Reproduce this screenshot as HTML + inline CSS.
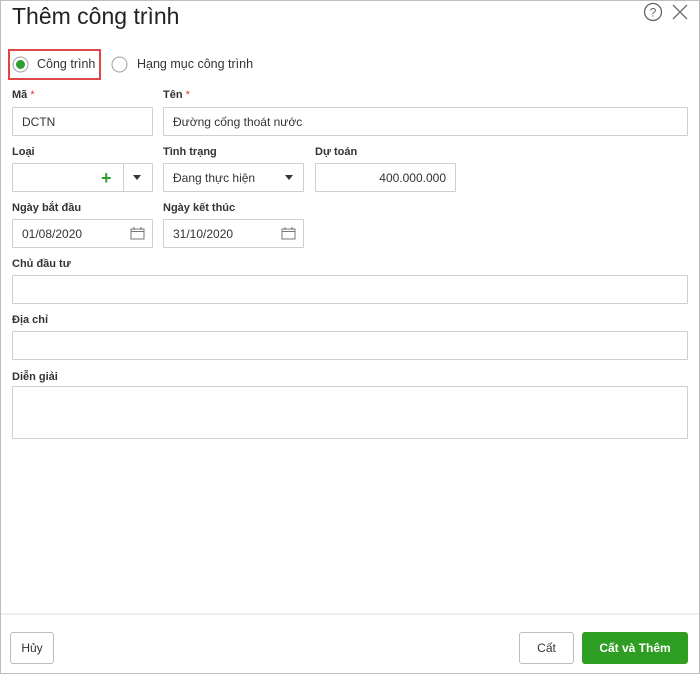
<!DOCTYPE html>
<html><head><meta charset="utf-8"><style>
*{box-sizing:border-box;margin:0;padding:0}
body{width:700px;height:674px;background:#fff;font-family:"Liberation Sans","DejaVu Sans",sans-serif;position:relative;overflow:hidden;color:#222}
.frame{position:absolute;left:0;top:0;width:700px;height:674px;border:1px solid #bdbdbd}
.a{position:absolute}
.lbl{position:absolute;font-size:11px;font-weight:bold;color:#333}
.lbl i{color:#e53935;font-style:normal;font-weight:normal}
.in{position:absolute;border:1px solid #cfcfcf;background:#fff;font-size:12px;color:#333;padding-left:9px;display:flex;align-items:center;border-radius:1px}
.btn{position:absolute;border:1px solid #bdbdbd;border-radius:3px;font-size:12px;display:flex;align-items:center;justify-content:center;background:#fff;color:#333}
</style></head><body>
<div class="frame"></div>
<div class="a" style="left:12px;top:3px;font-size:23px;color:#222">Thêm công trình</div>
<svg class="a" style="left:643px;top:2px" width="20" height="20" viewBox="0 0 20 20"><circle cx="10" cy="10" r="8.5" fill="none" stroke="#666" stroke-width="1.3"/><text x="10" y="14.5" font-size="12" text-anchor="middle" fill="#666" font-family="Liberation Sans">?</text></svg>
<svg class="a" style="left:671px;top:3px" width="18" height="18" viewBox="0 0 18 18"><path d="M2 2L16 16M16 2L2 16" stroke="#777" stroke-width="1.5"/></svg>

<div class="a" style="left:8px;top:49px;width:93px;height:31px;border:2px solid #e04646"></div>
<svg class="a" style="left:12px;top:56px" width="17" height="17"><circle cx="8.5" cy="8.5" r="7.5" fill="#fff" stroke="#9e9e9e"/><circle cx="8.5" cy="8.5" r="4.5" fill="#2e9e2e"/></svg>
<div class="a" style="left:37px;top:57px;font-size:12.5px;color:#333">Công trình</div>
<svg class="a" style="left:111px;top:56px" width="17" height="17"><circle cx="8.5" cy="8.5" r="7.5" fill="#fff" stroke="#9e9e9e"/></svg>
<div class="a" style="left:137px;top:57px;font-size:12.5px;color:#333">Hạng mục công trình</div>

<div class="lbl" style="left:12px;top:89px">Mã <i>*</i></div>
<div class="lbl" style="left:163px;top:89px">Tên <i>*</i></div>
<div class="in" style="left:12px;top:107px;width:141px;height:29px">DCTN</div>
<div class="in" style="left:163px;top:107px;width:525px;height:29px">Đường cống thoát nước</div>

<div class="lbl" style="left:12px;top:146px">Loại</div>
<div class="lbl" style="left:163px;top:146px">Tình trạng</div>
<div class="lbl" style="left:315px;top:146px">Dự toán</div>
<div class="in" style="left:12px;top:163px;width:141px;height:29px"></div>
<div class="a" style="left:123px;top:164px;width:1px;height:27px;background:#cfcfcf"></div>
<div class="a" style="left:101px;top:168px;font-size:18px;color:#2e9e2e;font-weight:bold">+</div>
<svg class="a" style="left:133px;top:175px" width="8" height="5"><path d="M0 0H8L4 5Z" fill="#333"/></svg>
<div class="in" style="left:163px;top:163px;width:141px;height:29px">Đang thực hiện</div>
<svg class="a" style="left:285px;top:175px" width="8" height="5"><path d="M0 0H8L4 5Z" fill="#333"/></svg>
<div class="in" style="left:315px;top:163px;width:141px;height:29px;justify-content:flex-end;padding-right:9px">400.000.000</div>

<div class="lbl" style="left:12px;top:202px">Ngày bắt đầu</div>
<div class="lbl" style="left:163px;top:202px">Ngày kết thúc</div>
<div class="in" style="left:12px;top:219px;width:141px;height:29px">01/08/2020</div>
<div class="in" style="left:163px;top:219px;width:141px;height:29px">31/10/2020</div>
<svg class="a" style="left:130px;top:226px" width="15" height="14"><rect x="1" y="3" width="13" height="10" fill="none" stroke="#777"/><path d="M1 5.5H14M4 1V4M11 1V4" stroke="#777"/></svg>
<svg class="a" style="left:281px;top:226px" width="15" height="14"><rect x="1" y="3" width="13" height="10" fill="none" stroke="#777"/><path d="M1 5.5H14M4 1V4M11 1V4" stroke="#777"/></svg>

<div class="lbl" style="left:12px;top:258px">Chủ đầu tư</div>
<div class="in" style="left:12px;top:275px;width:676px;height:29px"></div>
<div class="lbl" style="left:12px;top:314px">Địa chỉ</div>
<div class="in" style="left:12px;top:331px;width:676px;height:29px"></div>
<div class="lbl" style="left:12px;top:371px">Diễn giải</div>
<div class="in" style="left:12px;top:386px;width:676px;height:53px"></div>

<div class="a" style="left:1px;top:613px;width:698px;height:2px;background:#eeeeee"></div>
<div class="btn" style="left:10px;top:632px;width:44px;height:32px">Hủy</div>
<div class="btn" style="left:519px;top:632px;width:55px;height:32px">Cất</div>
<div class="btn" style="left:582px;top:632px;width:106px;height:32px;background:#2e9e22;border-color:#2e9e22;color:#fff;font-weight:bold">Cất và Thêm</div>
</body></html>
